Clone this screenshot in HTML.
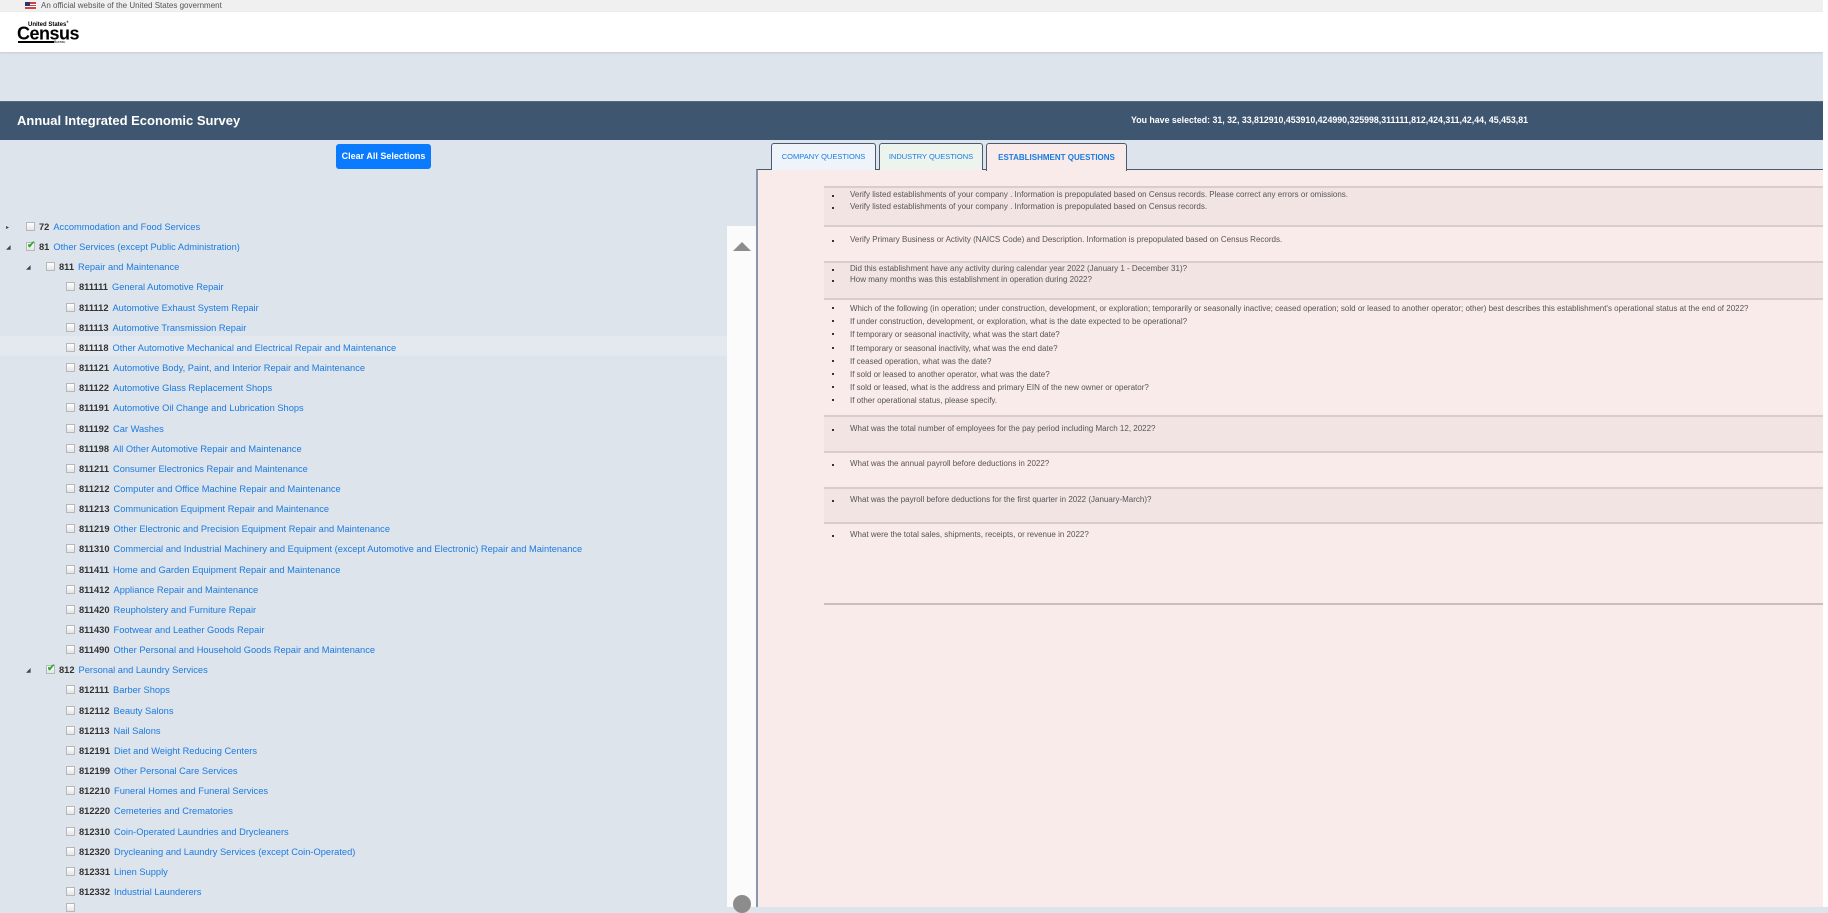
<!DOCTYPE html>
<html><head><meta charset="utf-8"><style>
*{margin:0;padding:0;box-sizing:border-box}
body{width:1828px;height:907px;overflow:hidden;background:#dee4ec;font-family:"Liberation Sans",sans-serif;position:relative}
.a{position:absolute}
.gov{left:0;top:0;width:1823px;height:12px;background:#f0f0f0;font-size:8px;color:#555;line-height:11px;padding-left:41px}
.hdr{left:0;top:12px;width:1823px;height:40px;background:#fff;box-shadow:0 1px 2px #c8ccd2}
.bar{left:0;top:101px;width:1823px;height:39px;background:#3f5670;border-top:1px solid #56697f}
.rw{position:absolute;height:20px;line-height:20px;font-size:9.3px;white-space:nowrap}
.rw b{color:#333;font-weight:bold;margin-right:4px}
.rw span{color:#1a7be0}
.cb{position:absolute;width:9px;height:9px;border:1px solid #b8b8b8;background:linear-gradient(#fff,#e4e4e4);top:5px}
.ex{position:absolute;font-size:6px;color:#333;top:0}
.q{position:absolute;left:824px;width:999px;border-top:2px solid #d9cccc}
.q li{list-style:none;font-size:8px;color:#555;position:relative;padding-left:26px;white-space:nowrap}
.q li:before{content:"";position:absolute;left:8px;top:5px;width:2px;height:2px;background:#333}
.tab{position:absolute;top:143px;height:27px;border:1px solid #4a5a72;border-bottom:none;border-radius:3px 3px 0 0;font-size:7.5px;color:#1a7be0;text-align:center;line-height:26px;white-space:nowrap}
</style></head><body>
<div class="a gov"><div class="a" style="left:25px;top:2px;width:11px;height:7px;background:linear-gradient(#c44 0 30%,#fff 30% 45%,#c44 45% 60%,#fff 60% 75%,#c44 75%)"><div style="width:5px;height:4px;background:#336"></div></div>An official website of the United States government</div>
<div class="a hdr">
 <div class="a" style="left:28px;top:8px;font-size:6px;font-weight:bold;color:#000">United States<sup style="font-size:3px">®</sup></div>
 <div class="a" style="left:17px;top:11px;font-size:18px;font-weight:bold;color:#000;letter-spacing:-0.5px;transform:scaleY(1.05)">Census</div>
 <div class="a" style="left:18px;top:29px;width:36px;height:2px;background:#000"></div>
 <div class="a" style="left:54px;top:28px;font-size:3.5px;color:#000">Bureau</div>
</div>
<div class="a bar"><div class="a" style="left:17px;top:11px;font-size:13px;font-weight:bold;color:#fff">Annual Integrated Economic Survey</div>
<div class="a" style="left:1131px;top:13px;font-size:8.8px;font-weight:bold;color:#fff;white-space:nowrap">You have selected: 31, 32, 33,812910,453910,424990,325998,311111,812,424,311,42,44, 45,453,81</div></div>
<div class="a" style="left:1823px;top:0;width:5px;height:907px;background:#fff"></div>
<div class="a" style="left:336px;top:144px;width:95px;height:25px;background:#0a7bff;border-radius:3px;color:#fff;font-size:9px;font-weight:bold;text-align:center;line-height:25px;white-space:nowrap">Clear All Selections</div>
<div class="a" style="left:0;top:336px;width:727px;height:20px;background:#e4e9f0"></div>
<div id="tree"></div>
<div class="a" style="left:727px;top:226px;width:29px;height:681px;background:#fbfbfb"></div>
<div class="a" style="left:733px;top:242px;width:0;height:0;border-left:9px solid transparent;border-right:9px solid transparent;border-bottom:9px solid #8c8c8c"></div>
<div class="a" style="left:733px;top:895px;width:18px;height:18px;border-radius:9px;background:#8c8c8c"></div>
<div class="a" style="left:756px;top:169px;width:1067px;height:738px;background:#f9ebea;border-left:2px solid #8a96ad;border-top:1px solid #4a5a72"></div>
<div class="tab" style="left:771px;width:105px;background:#eef4fa">COMPANY QUESTIONS</div>
<div class="tab" style="left:879px;width:104px;background:#edf4ee">INDUSTRY QUESTIONS</div>
<div class="tab" style="left:986px;width:141px;height:28px;background:#f9ebea;font-weight:bold;line-height:28px;font-size:8px">ESTABLISHMENT QUESTIONS</div>
<div class="q" style="top:186px;height:39px;background:#f3e4e4"><ul><li style="top:2px">Verify listed establishments of your company . Information is prepopulated based on Census records. Please correct any errors or omissions.</li><li style="top:5px">Verify listed establishments of your company . Information is prepopulated based on Census records.</li></ul></div>
<div class="q" style="top:225px;height:36px"><ul><li style="top:8px">Verify Primary Business or Activity (NAICS Code) and Description. Information is prepopulated based on Census Records.</li></ul></div>
<div class="q" style="top:261px;height:37px;background:#f3e4e4"><ul><li style="top:1px">Did this establishment have any activity during calendar year 2022 (January 1 - December 31)?</li><li style="top:3px">How many months was this establishment in operation during 2022?</li></ul></div>
<div class="q" style="top:298px;height:117px;line-height:13.2px"><ul style="padding-top:2px">
<li>Which of the following (in operation; under construction, development, or exploration; temporarily or seasonally inactive; ceased operation; sold or leased to another operator; other) best describes this establishment's operational status at the end of 2022?</li>
<li>If under construction, development, or exploration, what is the date expected to be operational?</li>
<li>If temporary or seasonal inactivity, what was the start date?</li>
<li>If temporary or seasonal inactivity, what was the end date?</li>
<li>If ceased operation, what was the date?</li>
<li>If sold or leased to another operator, what was the date?</li>
<li>If sold or leased, what is the address and primary EIN of the new owner or operator?</li>
<li>If other operational status, please specify.</li></ul></div>
<div class="q" style="top:415px;height:36px;background:#f3e4e4"><ul><li style="top:7px">What was the total number of employees for the pay period including March 12, 2022?</li></ul></div>
<div class="q" style="top:451px;height:36px"><ul><li style="top:6px">What was the annual payroll before deductions in 2022?</li></ul></div>
<div class="q" style="top:487px;height:35px;background:#f3e4e4"><ul><li style="top:6px">What was the payroll before deductions for the first quarter in 2022 (January-March)?</li></ul></div>
<div class="q" style="top:522px;height:83px;border-bottom:2px solid #cbbdbd"><ul><li style="top:6px">What were the total sales, shipments, receipts, or revenue in 2022?</li></ul></div>
<script>
var rows=[
[0,"72","Accommodation and Food Services",0],
[0,"81","Other Services (except Public Administration)",1],
[1,"811","Repair and Maintenance",0],
[2,"811111","General Automotive Repair"],[2,"811112","Automotive Exhaust System Repair"],[2,"811113","Automotive Transmission Repair"],[2,"811118","Other Automotive Mechanical and Electrical Repair and Maintenance"],[2,"811121","Automotive Body, Paint, and Interior Repair and Maintenance"],[2,"811122","Automotive Glass Replacement Shops"],[2,"811191","Automotive Oil Change and Lubrication Shops"],[2,"811192","Car Washes"],[2,"811198","All Other Automotive Repair and Maintenance"],[2,"811211","Consumer Electronics Repair and Maintenance"],[2,"811212","Computer and Office Machine Repair and Maintenance"],[2,"811213","Communication Equipment Repair and Maintenance"],[2,"811219","Other Electronic and Precision Equipment Repair and Maintenance"],[2,"811310","Commercial and Industrial Machinery and Equipment (except Automotive and Electronic) Repair and Maintenance"],[2,"811411","Home and Garden Equipment Repair and Maintenance"],[2,"811412","Appliance Repair and Maintenance"],[2,"811420","Reupholstery and Furniture Repair"],[2,"811430","Footwear and Leather Goods Repair"],[2,"811490","Other Personal and Household Goods Repair and Maintenance"],
[1,"812","Personal and Laundry Services",1],
[2,"812111","Barber Shops"],[2,"812112","Beauty Salons"],[2,"812113","Nail Salons"],[2,"812191","Diet and Weight Reducing Centers"],[2,"812199","Other Personal Care Services"],[2,"812210","Funeral Homes and Funeral Services"],[2,"812220","Cemeteries and Crematories"],[2,"812310","Coin-Operated Laundries and Drycleaners"],[2,"812320","Drycleaning and Laundry Services (except Coin-Operated)"],[2,"812331","Linen Supply"],[2,"812332","Industrial Launderers"]];
var h="";
rows.forEach(function(r,i){
 var y=217+i*20.15, lv=r[0], cx=[26,46,66][lv], ex=[6,26][lv];
 if(lv<2) h+='<div class="ex a" style="left:'+ex+'px;top:'+(y+7)+'px;font-size:6px;color:#444">'+(i==0?'▸':'◢')+'</div>';
 h+='<div class="cb" style="left:'+cx+'px;top:'+(y+5)+'px">'+(r[3]?'<div style="position:absolute;left:0;top:-2px;color:#3a3;font-size:10px;font-weight:bold;line-height:10px">✔</div>':'')+'</div>';
 h+='<div class="rw" style="left:'+(cx+13)+'px;top:'+y+'px"><b>'+r[1]+'</b><span>'+r[2]+'</span></div>';
});
h+='<div class="cb" style="left:66px;top:903px"></div>';
document.getElementById("tree").innerHTML=h;
</script>
</body></html>
